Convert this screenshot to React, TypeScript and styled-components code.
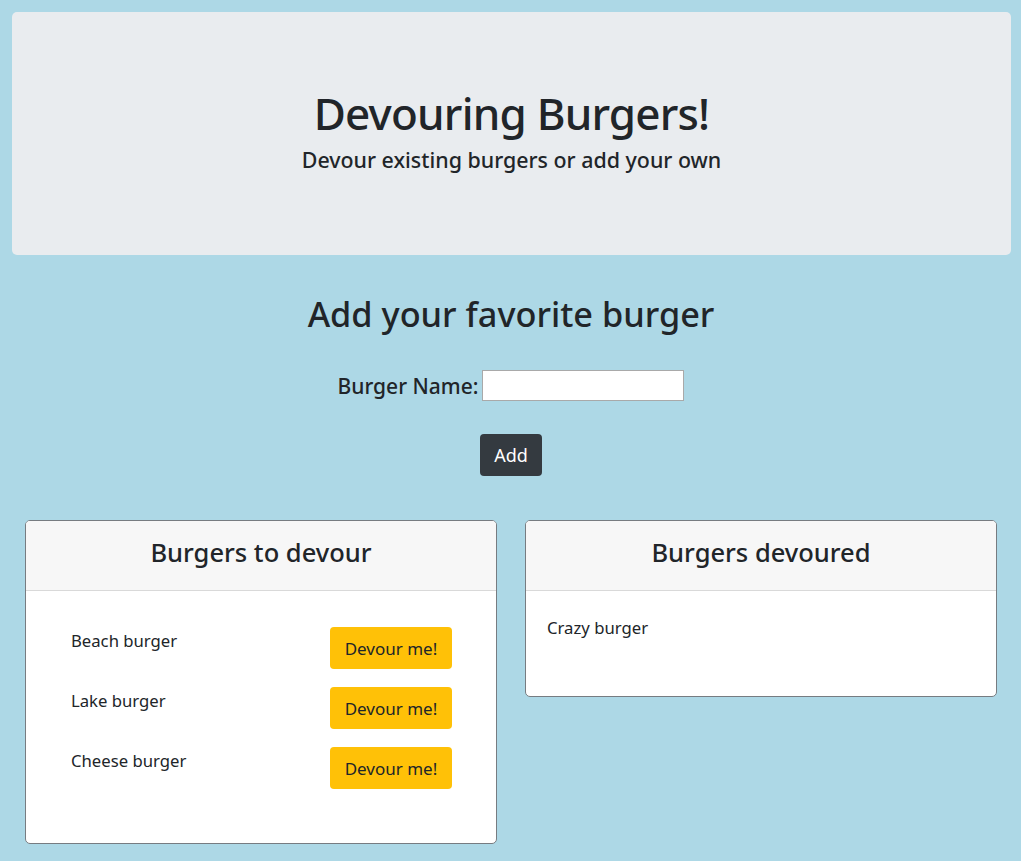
import React from "react";
import styled, { createGlobalStyle } from "styled-components";

const Global = createGlobalStyle`
  html, body { margin: 0; padding: 0; }
  body {
    background: #add8e6;
    font-family: "Noto Sans", "Open Sans", sans-serif;
    color: #212529;
  }
  * { box-sizing: border-box; }
`;

const Page = styled.div`
  padding: 12px 10px 20px 12px;
`;

const Jumbotron = styled.header`
  background: #e9ecef;
  border-radius: 5px;
  height: 243px;
  padding-top: 73px;
  text-align: center;
`;

const Title = styled.h1`
  margin: 0;
  font-size: 44px;
  line-height: 56px;
  font-weight: 500;
  letter-spacing: -0.8px;
`;

const Subtitle = styled.p`
  margin: 4px 0 0;
  font-size: 21.4px;
  line-height: 30px;
  font-weight: 500;
`;

const FormSection = styled.section`
  text-align: center;
  margin-top: 35px;
  padding-right: 1px;
`;

const FormTitle = styled.h2`
  margin: 0;
  font-size: 34.3px;
  line-height: 48px;
  font-weight: 500;
`;

const FieldRow = styled.div`
  display: flex;
  justify-content: center;
  align-items: center;
  gap: 4px;
  margin-top: 32px;
`;

const Label = styled.label`
  font-size: 21px;
  font-weight: 500;
`;

const Input = styled.input`
  width: 202px;
  height: 31px;
  border: 1px solid #a9a9a9;
  background: #fff;
  padding: 2px 4px;
  font-size: 16px;
`;

const AddButton = styled.button`
  margin-top: 33px;
  background: #343a40;
  color: #fff;
  border: none;
  border-radius: 4px;
  width: 62px;
  height: 42px;
  font-family: inherit;
  font-size: 18px;
`;

const Columns = styled.div`
  display: grid;
  grid-template-columns: 1fr 1fr;
  gap: 28px;
  padding: 0 14px 0 13px;
  margin-top: 44px;
  align-items: start;
`;

const Card = styled.div`
  background: #fff;
  border: 1px solid #777c81;
  border-radius: 5px;
  overflow: hidden;
`;

const CardHeader = styled.div`
  background: #f7f7f7;
  border-bottom: 1px solid #d9d9d9;
  padding: 14px 20px 21px;
  text-align: center;
`;

const CardTitle = styled.h3`
  margin: 0;
  font-size: 25.5px;
  line-height: 34px;
  font-weight: 500;
`;

const CardBody = styled.div`
  padding: 20px;
`;

const List = styled.ul`
  list-style: none;
  margin: 0;
  padding: 16px 24px 34px 25px;
  display: flex;
  flex-direction: column;
  gap: 18px;
`;

const Item = styled.li`
  display: flex;
  justify-content: space-between;
  align-items: flex-start;
`;

const ItemName = styled.span<{ $spaced?: boolean }>`
  font-size: 16.7px;
  line-height: 27px;
  display: block;
  margin: ${(p) => (p.$spaced ? "3px 0 35px 1px" : "0")};
`;

const DevourButton = styled.button`
  background: #ffc107;
  color: #212529;
  border: none;
  border-radius: 4px;
  width: 122px;
  height: 42px;
  font-family: inherit;
  font-size: 17px;
`;

const toDevour = ["Beach burger", "Lake burger", "Cheese burger"];
const devoured = ["Crazy burger"];

export default function App() {
  return (
    <>
      <Global />
      <Page>
        <Jumbotron>
          <Title>Devouring Burgers!</Title>
          <Subtitle>Devour existing burgers or add your own</Subtitle>
        </Jumbotron>
        <FormSection>
          <FormTitle>Add your favorite burger</FormTitle>
          <FieldRow>
            <Label htmlFor="bn">Burger Name:</Label>
            <Input id="bn" type="text" />
          </FieldRow>
          <AddButton>Add</AddButton>
        </FormSection>
        <Columns>
          <Card>
            <CardHeader>
              <CardTitle>Burgers to devour</CardTitle>
            </CardHeader>
            <CardBody>
              <List>
                {toDevour.map((b) => (
                  <Item key={b}>
                    <ItemName>{b}</ItemName>
                    <DevourButton>Devour me!</DevourButton>
                  </Item>
                ))}
              </List>
            </CardBody>
          </Card>
          <Card>
            <CardHeader>
              <CardTitle>Burgers devoured</CardTitle>
            </CardHeader>
            <CardBody>
              {devoured.map((b) => (
                <ItemName key={b} $spaced>
                  {b}
                </ItemName>
              ))}
            </CardBody>
          </Card>
        </Columns>
      </Page>
    </>
  );
}
